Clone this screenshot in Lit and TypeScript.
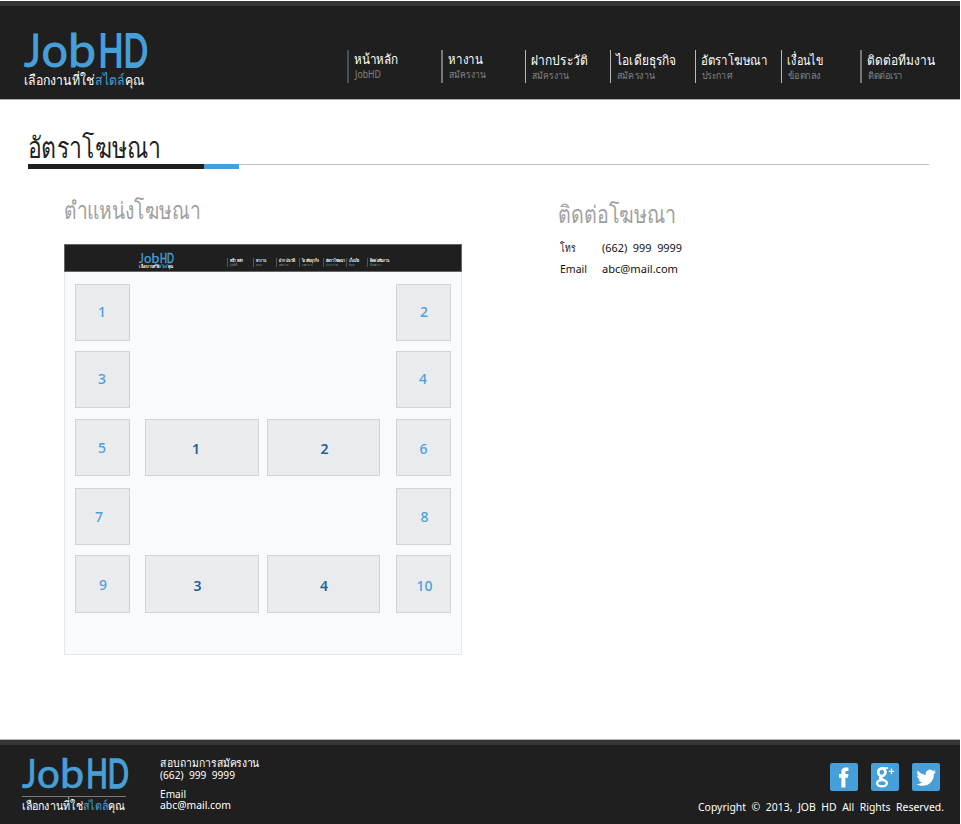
import { LitElement, html, css, svg } from "lit";
import { customElement } from "lit/decorators.js";
import { styleMap } from "lit/directives/style-map.js";

/** One line of text fitted to a width, with its baseline at a given height. */
const line = (content: unknown, width: number, height: number, base: number, cls: string) => html`
  <svg class="line ${cls}" width=${width} height=${height}>
    ${svg`<text x="0" y=${base} textLength=${width} lengthAdjust="spacingAndGlyphs">${content}</text>`}
  </svg>`;

const tagline = svg`เลือกงานที่ใช่<tspan class="accent">สไตล์</tspan>คุณ`;

/** Word mark; the viewBox is 124 x 36. */
const wordmark = (width: number, height: number) => html`
  <svg class="mark" width=${width} height=${height} viewBox="0 0 124 36" preserveAspectRatio="none">
    <text x="0" y="33.5" textLength="17" lengthAdjust="spacingAndGlyphs">J</text>
    <text x="17.5" y="33.5" textLength="26.5" lengthAdjust="spacingAndGlyphs">o</text>
    <text x="44" y="33.5" textLength="28" lengthAdjust="spacingAndGlyphs">b</text>
    <text class="caps" x="74.5" y="33.5" textLength="25" lengthAdjust="spacingAndGlyphs">H</text>
    <text class="caps" x="99.5" y="33.5" textLength="24.5" lengthAdjust="spacingAndGlyphs">D</text>
  </svg>`;

interface NavItem { title: string; sub: string; tw: number; sw: number; step: number; drop: number; tone: string; }
const NAV: NavItem[] = [
  { title: "หน้าหลัก", sub: "JobHD", tw: 44, sw: 26, step: 94, drop: 0, tone: "blue" },
  { title: "หางาน", sub: "สมัครงาน", tw: 35, sw: 37, step: 83, drop: 0, tone: "dim" },
  { title: "ฝากประวัติ", sub: "สมัครงาน", tw: 57, sw: 37, step: 85, drop: 1, tone: "" },
  { title: "ไอเดียธุรกิจ", sub: "สมัครงาน", tw: 60, sw: 38, step: 85, drop: 1, tone: "" },
  { title: "อัตราโฆษณา", sub: "ประกาศ", tw: 67, sw: 30, step: 86, drop: 1, tone: "" },
  { title: "เงื่อนไข", sub: "ข้อตกลง", tw: 36, sw: 33, step: 80, drop: 1, tone: "" },
  { title: "ติดต่อทีมงาน", sub: "ติดต่อเรา", tw: 68, sw: 35, step: 80, drop: 1, tone: "dim" },
];
const MINI_STEPS = [26, 23, 23, 24, 23, 21, 24];
const MINI_WIDTHS = [13, 10, 16, 17, 19, 10, 19];

interface Slot { n: string; x: number; y: number; kind: "side" | "wide"; }
const SLOTS: (Slot | null)[] = [
  { n: "1", x: 27, y: 33, kind: "side" }, null, null, { n: "2", x: 28, y: 33, kind: "side" },
  { n: "3", x: 27, y: 33, kind: "side" }, null, null, { n: "4", x: 27, y: 33, kind: "side" },
  { n: "5", x: 27, y: 34, kind: "side" }, { n: "1", x: 51, y: 34.5, kind: "wide" }, { n: "2", x: 57.5, y: 34.5, kind: "wide" }, { n: "6", x: 27.5, y: 35, kind: "side" },
  { n: "7", x: 24, y: 34, kind: "side" }, null, null, { n: "8", x: 28.5, y: 34, kind: "side" },
  { n: "9", x: 28, y: 35, kind: "side" }, { n: "3", x: 52.5, y: 35.5, kind: "wide" }, { n: "4", x: 57, y: 35.5, kind: "wide" }, { n: "10", x: 28.5, y: 35.5, kind: "side" },
];

@customElement("ad-layout")
export class AdLayout extends LitElement {
  static styles = css`
    :host { display: block; width: 398px; height: 411px; box-sizing: border-box; background: #f9fafc; border: 1px solid #e6e8ea; border-top: 0; font-family: "Noto Sans", "Open Sans", sans-serif; }
    .bar { display: flex; height: 28px; margin: 0 -1px; box-sizing: border-box; background: #1e1f1e; border: 1px solid #666; }
    .brand { width: 88px; padding: 8px 0 0 74px; }
    .mark { display: block; overflow: visible; font: 400 46px Lato, sans-serif; fill: #479fd9; stroke: #479fd9; stroke-width: 0.8; }
    .caps { stroke-width: 1.8; }
    .line { display: block; overflow: visible; fill: #fff; }
    .tag { font-size: 4.5px; font-weight: 700; }
    .accent { fill: #479fd9; }
    .nav { display: flex; padding-top: 13px; }
    .item { height: 9px; border-left: 1px solid #555; padding-left: 2px; box-sizing: border-box; }
    .mt { font-size: 4.5px; font-weight: 700; }
    .ms { font-size: 3px; fill: #999; }
    .grid { display: grid; grid-template-columns: 70px 122px 129px 55px; grid-template-rows: 67px 68px 69px 67px 58px; padding: 12px 0 0 10px; }
    .slot { display: block; box-sizing: border-box; background: #eaebed; border: 1px solid #d1d3d5; width: 55px; height: 57px; fill: #4c9fdb; font-size: 14px; font-weight: 500; text-anchor: middle; }
    .wide { width: 114px; fill: #1f6097; font-weight: 600; }
    .wide.third { width: 113px; }
    .last { height: 58px; }
  `;
  render() {
    return html`
      <div class="bar">
        <div class="brand">${wordmark(35, 11)}${line(tagline, 34, 5, 3.8, "tag")}</div>
        <div class="nav">${NAV.map((n, i) => html`
          <div class="item" style=${styleMap({ width: `${MINI_STEPS[i]}px` })}>
            ${line(n.title, MINI_WIDTHS[i], 5, 4.3, "mt")}${line(n.sub, MINI_WIDTHS[i] * 0.6, 3, 3, "ms")}
          </div>`)}</div>
      </div>
      <div class="grid">${SLOTS.map((s, i) => s
        ? html`<svg class="slot ${s.kind} ${i > 15 ? "last" : ""} ${i % 4 === 2 ? "third" : ""}"><text x=${s.x - 1} y=${s.y - 1}>${s.n}</text></svg>`
        : html`<span></span>`)}</div>`;
  }
}

@customElement("app-root")
export class AppRoot extends LitElement {
  static styles = css`
    :host { display: flex; flex-direction: column; width: 960px; height: 824px; background: #fff; font-family: "Noto Sans", "Open Sans", sans-serif; overflow: hidden; }
    .line { display: block; overflow: visible; fill: #fff; }
    .mark { display: block; overflow: visible; font: 400 46px Lato, sans-serif; fill: #479fd9; stroke: #479fd9; stroke-width: 0.8; }
    .caps { stroke-width: 1.8; }
    .accent { fill: #479fd9; }
    .header { display: flex; flex: none; height: 99px; margin-top: 1px; box-sizing: border-box; background: #1e1f1e; border-top: 5px solid #363636; border-bottom: 1px solid #aaa; }
    .brand { width: 324px; padding: 27px 0 0 24px; }
    .tag { font-size: 14px; }
    .nav { display: flex; padding-top: 44px; }
    .item { height: 33px; box-sizing: border-box; border-left: 1px solid #b9b9b9; padding-left: 5px; }
    .blue { border-left: 2px solid #3d5365; margin-left: -1px; }
    .dim { border-left: 2px solid #777; margin-left: -1px; padding-right: 1px; }
    .nt { font-size: 13.5px; }
    .ns { font-size: 10px; fill: #858585; padding-left: 1px; }
    .title { padding: 32px 0 0 28px; }
    .h1 { font-size: 29px; fill: #1e1f1e; }
    .rule { display: flex; width: 901px; height: 5px; }
    .black { width: 176px; background: #1e1f1e; }
    .cyan { width: 35px; background: #479fd9; }
    .hair { flex: 1; height: 1px; background: #c4c4c4; }
    .cols { display: flex; flex: 1; padding-left: 64px; }
    .left { width: 494px; padding-top: 27px; }
    .h2 { font-size: 24px; fill: #a0a0a0; }
    .right { padding-top: 31px; }
    .contact { display: grid; grid-template-columns: 42px auto; grid-template-rows: 22px 22px; padding: 12px 0 0 2px; }
    .ct { font-size: 11.5px; fill: #111; word-spacing: 3px; }
    .footer { display: flex; flex: none; height: 84px; box-sizing: border-box; background: #1e1f1e; border-top: 5px solid #363636; box-shadow: 0 -1px #b5b5b5; }
    .fbrand { width: 138px; padding: 14px 0 0 22px; }
    .sep { width: 104px; height: 1px; margin: 6px 0 2px; background: #7b7777; }
    .ftag { font-size: 12px; }
    .info { flex: 1; padding-top: 11px; }
    .ft { font-size: 11px; word-spacing: 3px; }
    .legal { width: 246px; padding: 18px 16px 0 0; }
    .social { display: flex; gap: 13px; justify-content: flex-end; padding-right: 4px; height: 28px; }
    .icon { width: 28px; height: 28px; display: block; }
    .tile { fill: #479fd9; }
    .glyph { fill: #fff; }
    .stroke { fill: none; stroke: #fff; }
  `;
  render() {
    return html`
      <div class="header">
        <div class="brand">${wordmark(124, 36)}${line(tagline, 120, 20, 16, "tag")}</div>
        <div class="nav">${NAV.map((n) => html`
          <div class="item ${n.tone}" style=${styleMap({ width: `${n.step + (n.tone ? 1 : 0)}px` })}>
            ${line(n.title, n.tw, 18, 14 + n.drop, "nt")}${line(n.sub, n.sw, 14, 10 + n.drop * 0.5, "ns")}
          </div>`)}</div>
      </div>
      <div class="title">${line("อัตราโฆษณา", 133, 32, 26, "h1")}
        <div class="rule"><div class="black"></div><div class="cyan"></div><div class="hair"></div></div>
      </div>
      <div class="cols">
        <div class="left">${line("ตำแหน่งโฆษณา", 136, 48, 23, "h2")}<ad-layout></ad-layout></div>
        <div class="right">${line("ติดต่อโฆษณา", 118, 28, 23, "h2")}
          <div class="contact">
            ${line("โทร", 15, 18, 12, "ct")}${line("(662) 999 9999", 80, 18, 12, "ct")}
            ${line("Email", 27, 18, 11, "ct")}${line("abc@mail.com", 76, 18, 11, "ct")}
          </div>
        </div>
      </div>
      <div class="footer">
        <div class="fbrand">${wordmark(107, 31)}<div class="sep"></div>${line(tagline, 103, 16, 11, "ftag")}</div>
        <div class="info">
          ${line("สอบถามการสมัครงาน", 100, 12, 11, "ft")}${line("(662) 999 9999", 75, 19, 11, "ft")}
          ${line("Email", 26, 11, 11, "ft")}${line("abc@mail.com", 71, 12, 11, "ft")}
        </div>
        <div class="legal">
          <div class="social">
            <svg class="icon" viewBox="0 0 28 28"><rect class="tile" width="28" height="28" rx="2"/><path class="glyph" d="M11.4 24.5V14.7H9V10.9h2.4V8.5c0-3 1.7-4.1 4.2-4.1h2.8v3.7h-1.8c-1 0-1.2.5-1.2 1.2v1.6h3l-.4 3.8h-2.6v9.8z"/></svg>
            <svg class="icon" viewBox="0 0 28 28"><rect class="tile" width="28" height="28" rx="2"/><ellipse class="stroke" cx="10.8" cy="9.2" rx="3.6" ry="3.8" stroke-width="2.6"/><ellipse class="stroke" cx="11" cy="20.2" rx="4.9" ry="3.1" stroke-width="2.4"/><path class="stroke" d="M11 5.2h6.2M13.7 6.2c1.5 2 .9 4.3-.5 5.3-4.2 2.8-3.4 3.6-.4 5.2 1.7.9 2.7 1.7 2.9 3.1M10.2 13.1c-2.6 1.5-1.7 3 .4 3.9" stroke-width="1.8"/><path class="stroke" d="M20.5 5.6v5.6M17.8 8.4h5.4" stroke-width="1.2"/></svg>
            <svg class="icon" viewBox="0 0 28 28"><rect class="tile" width="28" height="28" rx="2"/><path class="glyph" d="M24 8.6c-.7.3-1.5.6-2.3.7.8-.5 1.4-1.3 1.7-2.2-.8.5-1.6.8-2.5 1a4 4 0 0 0-6.9 3.7c-3.3-.2-6.3-1.8-8.3-4.3-1.1 1.9-.6 4.2 1.2 5.4-.7 0-1.3-.2-1.8-.5 0 2 1.4 3.6 3.2 4-.6.2-1.2.2-1.8.1.5 1.6 2 2.7 3.7 2.8-1.7 1.3-3.7 1.9-5.8 1.7 8 4.8 17.5-.3 17.5-9.7.8-.6 1.5-1.4 2.1-2.7z"/></svg>
          </div>
          ${line("Copyright © 2013, JOB HD All Rights Reserved.", 246, 24, 20, "ft")}
        </div>
      </div>`;
  }
}
